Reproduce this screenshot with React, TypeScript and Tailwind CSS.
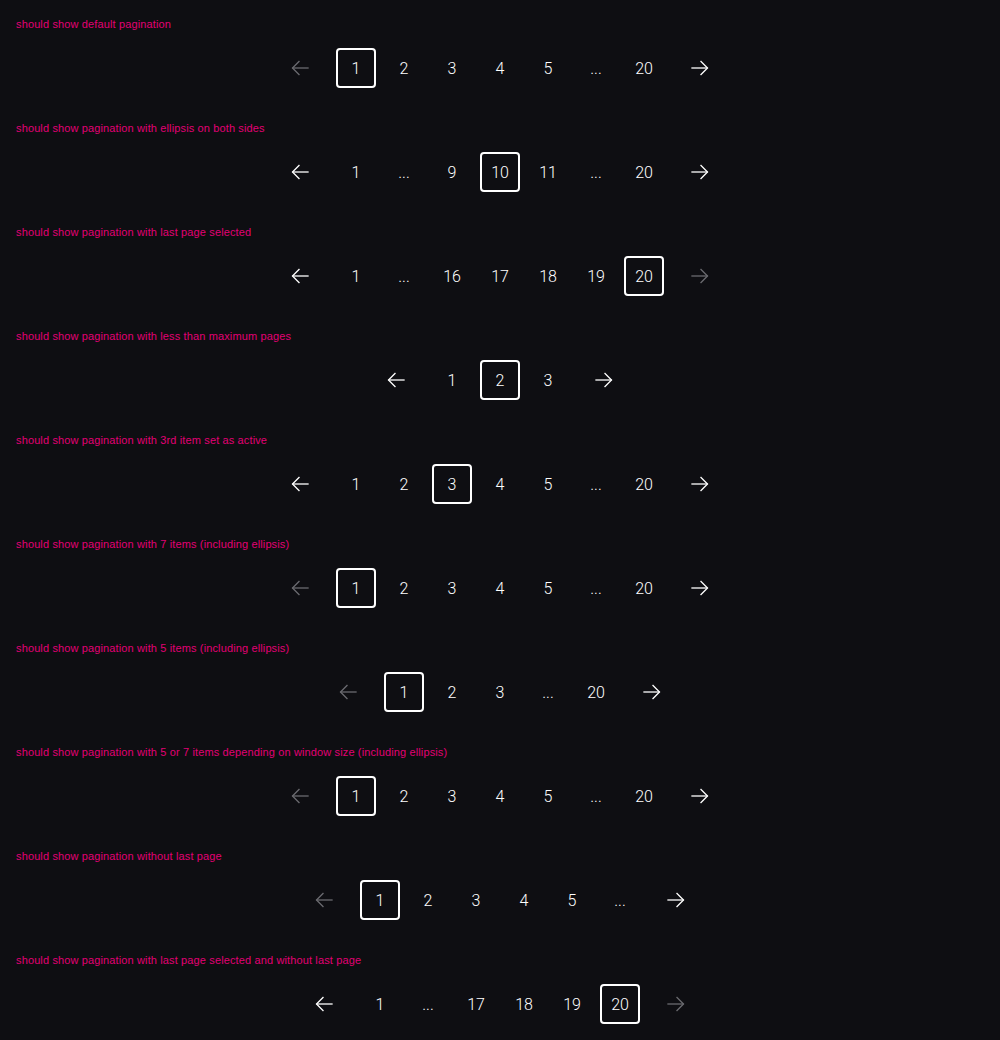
import React from "react";

type Item = number | "...";

interface Case {
  label: string;
  items: Item[];
  active: number;
  prevDisabled: boolean;
  nextDisabled: boolean;
}

const cases: Case[] = [
  { label: "should show default pagination", items: [1, 2, 3, 4, 5, "...", 20], active: 1, prevDisabled: true, nextDisabled: false },
  { label: "should show pagination with ellipsis on both sides", items: [1, "...", 9, 10, 11, "...", 20], active: 10, prevDisabled: false, nextDisabled: false },
  { label: "should show pagination with last page selected", items: [1, "...", 16, 17, 18, 19, 20], active: 20, prevDisabled: false, nextDisabled: true },
  { label: "should show pagination with less than maximum pages", items: [1, 2, 3], active: 2, prevDisabled: false, nextDisabled: false },
  { label: "should show pagination with 3rd item set as active", items: [1, 2, 3, 4, 5, "...", 20], active: 3, prevDisabled: false, nextDisabled: false },
  { label: "should show pagination with 7 items (including ellipsis)", items: [1, 2, 3, 4, 5, "...", 20], active: 1, prevDisabled: true, nextDisabled: false },
  { label: "should show pagination with 5 items (including ellipsis)", items: [1, 2, 3, "...", 20], active: 1, prevDisabled: true, nextDisabled: false },
  { label: "should show pagination with 5 or 7 items depending on window size (including ellipsis)", items: [1, 2, 3, 4, 5, "...", 20], active: 1, prevDisabled: true, nextDisabled: false },
  { label: "should show pagination without last page", items: [1, 2, 3, 4, 5, "..."], active: 1, prevDisabled: true, nextDisabled: false },
  { label: "should show pagination with last page selected and without last page", items: [1, "...", 17, 18, 19, 20], active: 20, prevDisabled: false, nextDisabled: true },
];

function Arrow({ dir, disabled }: { dir: "left" | "right"; disabled: boolean }) {
  const color = disabled ? "#6b6b70" : "#ffffff";
  return (
    <div className="flex h-10 w-10 items-center justify-center">
      <svg width="18" height="16" viewBox="0 0 18 16" fill="none" stroke={color} strokeWidth="1.3" strokeLinecap="square">
        {dir === "right" ? (
          <>
            <path d="M1 8H16" />
            <path d="M10 1.5L16.5 8L10 14.5" />
          </>
        ) : (
          <>
            <path d="M17 8H2" />
            <path d="M8 1.5L1.5 8L8 14.5" />
          </>
        )}
      </svg>
    </div>
  );
}

function Pagination({ c }: { c: Case }) {
  return (
    <div className="flex items-center justify-center gap-2">
      <div className="mr-2">
        <Arrow dir="left" disabled={c.prevDisabled} />
      </div>
      {c.items.map((it, i) => {
        const isActive = it === c.active;
        return (
          <div
            key={i}
            className={
              isActive
                ? "flex h-10 w-10 items-center justify-center rounded-[4px] border-2 border-white pt-[2px] text-[16px] font-light text-white"
                : "flex h-10 w-10 items-center justify-center pt-[2px] text-[16px] font-light text-white"
            }
          >
            {it === "..." ? "..." : it}
          </div>
        );
      })}
      <div className="ml-2">
        <Arrow dir="right" disabled={c.nextDisabled} />
      </div>
    </div>
  );
}

export default function App() {
  return (
    <div className="min-h-[1040px] w-full bg-[#0e0e12] font-['Roboto',sans-serif]">
      {cases.map((c, i) => (
        <div key={i} className="px-4 pb-4 pt-[17px]">
          <div className="h-[14px] text-[11px] leading-[14px] tracking-[0.13px] text-[#e20074] font-['Liberation_Sans',sans-serif]">
            {c.label}
          </div>
          <div className="mt-[17px]">
            <Pagination c={c} />
          </div>
        </div>
      ))}
    </div>
  );
}
